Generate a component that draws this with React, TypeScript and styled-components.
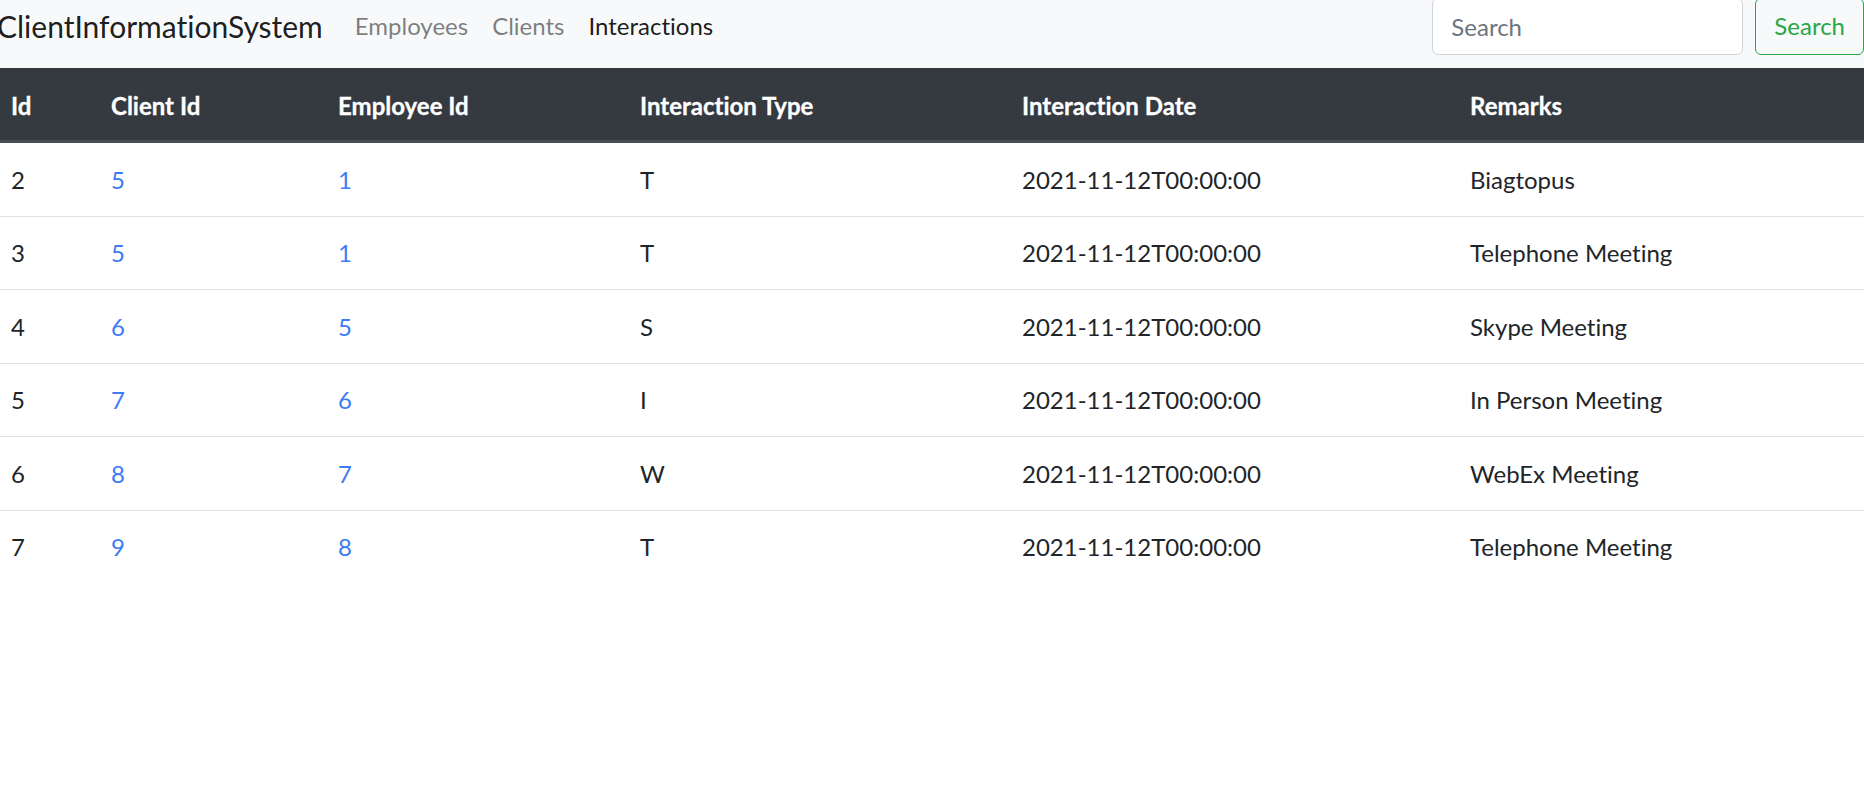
import React from "react";
import styled, { createGlobalStyle } from "styled-components";

const GlobalStyle = createGlobalStyle`
  html, body {
    margin: 0;
    padding: 0;
    background: #ffffff;
    overflow: hidden;
  }
  body {
    font-family: "Segoe UI", Lato, "Noto Sans", sans-serif;
    font-size: 24px;
    line-height: 1.5;
    color: #212529;
    font-variant-ligatures: none;
    font-feature-settings: "liga" 0, "clig" 0;
  }
`;

const Page = styled.div`
  width: 1915px;
  margin: -16px 0 0 -27px;
`;

const NavBar = styled.nav`
  display: flex;
  align-items: center;
  height: 84px;
  box-sizing: border-box;
  padding: 12px 24px;
  background: #f8f9fa;
`;

const Brand = styled.a`
  font-size: 30px;
  line-height: 45px;
  color: rgba(0, 0, 0, 0.9);
  margin-right: 20px;
  text-decoration: none;
  white-space: nowrap;
`;

const NavList = styled.div`
  display: flex;
  align-items: center;
`;

const NavLink = styled.a<{ $active?: boolean }>`
  padding: 12px;
  font-size: 24px;
  line-height: 36px;
  text-decoration: none;
  color: ${(p) => (p.$active ? "rgba(0, 0, 0, 0.9)" : "rgba(0, 0, 0, 0.5)")};
`;

const SearchForm = styled.form`
  display: flex;
  align-items: center;
  margin-left: auto;
  gap: 12px;
`;

const SearchInput = styled.input`
  width: 311px;
  height: 57px;
  box-sizing: border-box;
  padding: 9px 18px;
  font-family: inherit;
  font-size: 24px;
  line-height: 36px;
  color: #495057;
  background: #ffffff;
  border: 1.5px solid #ced4da;
  border-radius: 6px;
  outline: none;
  &::placeholder {
    color: #6c757d;
  }
`;

const OutlineButton = styled.button`
  height: 57px;
  box-sizing: border-box;
  padding: 9px 18px;
  font-family: inherit;
  font-size: 24px;
  line-height: 36px;
  color: #28a745;
  background: transparent;
  border: 1.5px solid #28a745;
  border-radius: 6px;
  white-space: nowrap;
`;

const TableWrap = styled.div`
  margin-left: 20px;
`;

const Table = styled.table`
  width: 100%;
  table-layout: fixed;
  border-collapse: collapse;
`;

const HeadCell = styled.th<{ $w?: number }>`
  width: ${(p) => (p.$w ? `${p.$w}px` : "auto")};
  box-sizing: border-box;
  padding: 20px 18px 16px;
  text-align: left;
  font-weight: 700;
  line-height: 36px;
  color: #ffffff;
  background: #343a40;
  border-bottom: 3px solid #454d55;
  -webkit-text-stroke: 0.3px #ffffff;
`;

const Row = styled.tr``;

const Cell = styled.td`
  padding: 18.5px 18px 18px;
  line-height: 36px;
  border-top: 1px solid #dee2e6;
  white-space: nowrap;
`;

const Link = styled.a`
  color: #3d7bf6;
  text-decoration: none;
`;

const rows = [
  { id: 2, client: 5, emp: 1, type: "T", date: "2021-11-12T00:00:00", remarks: "Biagtopus" },
  { id: 3, client: 5, emp: 1, type: "T", date: "2021-11-12T00:00:00", remarks: "Telephone Meeting" },
  { id: 4, client: 6, emp: 5, type: "S", date: "2021-11-12T00:00:00", remarks: "Skype Meeting" },
  { id: 5, client: 7, emp: 6, type: "I", date: "2021-11-12T00:00:00", remarks: "In Person Meeting" },
  { id: 6, client: 8, emp: 7, type: "W", date: "2021-11-12T00:00:00", remarks: "WebEx Meeting" },
  { id: 7, client: 9, emp: 8, type: "T", date: "2021-11-12T00:00:00", remarks: "Telephone Meeting" },
];

export default function App() {
  return (
    <Page>
      <GlobalStyle />
      <NavBar>
        <Brand href="#">ClientInformationSystem</Brand>
        <NavList>
          <NavLink href="#">Employees</NavLink>
          <NavLink href="#">Clients</NavLink>
          <NavLink href="#" $active>
            Interactions
          </NavLink>
        </NavList>
        <SearchForm onSubmit={(e) => e.preventDefault()}>
          <SearchInput type="search" placeholder="Search" />
          <OutlineButton type="submit">Search</OutlineButton>
        </SearchForm>
      </NavBar>
      <TableWrap>
        <Table>
          <thead>
            <tr>
              <HeadCell $w={100}>Id</HeadCell>
              <HeadCell $w={227}>Client Id</HeadCell>
              <HeadCell $w={302}>Employee Id</HeadCell>
              <HeadCell $w={382}>Interaction Type</HeadCell>
              <HeadCell $w={448}>Interaction Date</HeadCell>
              <HeadCell>Remarks</HeadCell>
            </tr>
          </thead>
          <tbody>
            {rows.map((r) => (
              <Row key={r.id}>
                <Cell>{r.id}</Cell>
                <Cell>
                  <Link href="#">{r.client}</Link>
                </Cell>
                <Cell>
                  <Link href="#">{r.emp}</Link>
                </Cell>
                <Cell>{r.type}</Cell>
                <Cell>{r.date}</Cell>
                <Cell>{r.remarks}</Cell>
              </Row>
            ))}
          </tbody>
        </Table>
      </TableWrap>
    </Page>
  );
}
